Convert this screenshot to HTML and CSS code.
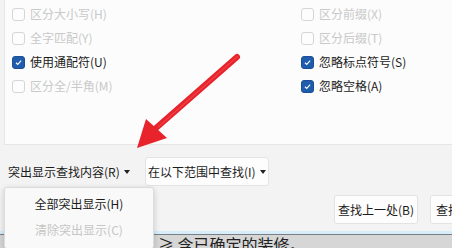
FILE: index.html
```html
<!DOCTYPE html>
<html lang="zh-CN">
<head>
<meta charset="utf-8">
<link rel="stylesheet" href="styles.css">
</head>
<body>
<div class="page">
  <section class="options">
    <div class="col col-left">
      <label class="opt disabled"><span class="box"></span>区分大小写(H)</label>
      <label class="opt disabled"><span class="box"></span>全字匹配(Y)</label>
      <label class="opt"><span class="box checked"><svg viewBox="0 0 13 13"><path d="M3.5 6.8 L5.6 8.8 L9.6 4.4" fill="none" stroke="#fff" stroke-width="1.3"/></svg></span>使用通配符(U)</label>
      <label class="opt disabled"><span class="box"></span>区分全/半角(M)</label>
    </div>
    <div class="col col-right">
      <label class="opt disabled"><span class="box"></span>区分前缀(X)</label>
      <label class="opt disabled"><span class="box"></span>区分后缀(T)</label>
      <label class="opt"><span class="box checked"><svg viewBox="0 0 13 13"><path d="M3.5 6.8 L5.6 8.8 L9.6 4.4" fill="none" stroke="#fff" stroke-width="1.3"/></svg></span>忽略标点符号(S)</label>
      <label class="opt"><span class="box checked"><svg viewBox="0 0 13 13"><path d="M3.5 6.8 L5.6 8.8 L9.6 4.4" fill="none" stroke="#fff" stroke-width="1.3"/></svg></span>忽略空格(A)</label>
    </div>
  </section>
  <div class="toolbar">
    <span class="drop-label">突出显示查找内容(R)<span class="caret"></span></span>
    <button class="btn drop-btn">在以下范围中查找(I)<span class="caret"></span></button>
  </div>
  <div class="actions">
    <button class="btn act">查找上一处(B)</button>
    <div class="clip"><button class="btn act next">查找下一处(F)</button></div>
  </div>
  <div class="docstrip">
    <div class="doctext">≥ 含已确定的装修。</div>
  </div>

  <svg class="arrow" viewBox="0 0 452 248" width="452" height="248">
    <path d="M237 57 L156 128" stroke="#e8232b" stroke-width="6" stroke-linecap="round"/>
    <path d="M238 56 L158 127" stroke="#f0545a" stroke-width="1.2" opacity="0.6"/>
    <polygon points="137,148 146,119 167,138" fill="#e8232b"/>
  </svg>

  <div class="menu">
    <div class="menu-item">全部突出显示(H)</div>
    <div class="menu-item disabled">清除突出显示(C)</div>
  </div>
</div>
</body>
</html>
```
FILE: styles.css
```css
* { box-sizing: border-box; }
html, body { margin: 0; padding: 0; }
body {
  font-family: "Noto Sans CJK SC", "Noto Sans", sans-serif;
  font-size: 12px;
  color: #1b1b1b;
  background: #f3f3f3;
  width: 452px;
  height: 248px;
  overflow: hidden;
}
.page { position: relative; width: 452px; height: 248px; overflow: hidden; }

.options {
  margin-left: 4px;
  height: 145px;
  background: #fcfcfc;
  border-left: 1px solid #e6e6e6;
  border-bottom: 1px solid #e6e6e6;
  display: grid;
  grid-template-columns: 296px 1fr;
  padding-top: 2px;
}
.col { display: flex; flex-direction: column; }
.col-left { padding-left: 7px; }
.col-right { padding-left: 0; }
.opt {
  height: 24px;
  display: flex;
  align-items: center;
  gap: 5px;
  white-space: nowrap;
  line-height: 1;
}
.opt.disabled { color: #c9c9c9; }
.box {
  width: 13px; height: 13px;
  border: 1px solid #d6d6d6;
  border-radius: 3px;
  background: #fdfdfd;
  flex: none;
  display: flex;
}
.box.checked {
  background: #1f5cab;
  border-color: #1b4f96;
}
.box svg { width: 11px; height: 11px; }

.toolbar {
  display: flex;
  align-items: center;
  height: 29px;
  margin-top: 12px;
  padding-left: 8px;
  gap: 15px;
}
.drop-label { display: flex; align-items: center; white-space: nowrap; }
.caret {
  display: inline-block;
  width: 0; height: 0;
  border-left: 3.5px solid transparent;
  border-right: 3.5px solid transparent;
  border-top: 4px solid #222;
  margin-left: 4px;
}
.btn {
  font: inherit;
  color: #1b1b1b;
  background: #fdfdfd;
  border: 1px solid #e3e3e3;
  border-radius: 3px;
  padding: 0;
  display: flex;
  align-items: center;
  justify-content: center;
  white-space: nowrap;
}
.drop-btn { width: 124px; height: 29px; }

.actions {
  display: flex;
  gap: 12px;
  padding-left: 334px;
  margin-top: 9px;
  height: 29px;
}
.act { width: 84px; height: 29px; flex: none; }
.clip { flex: 1; overflow: hidden; }
.next { justify-content: flex-start; padding-left: 5px; }

.docstrip {
  margin-top: 7px;
  height: 17px;
  border-top: 3px solid #d7edf9;
  background: #d6d6d6;
  overflow: hidden;
}
.docstrip::before {
  content: "";
  display: block;
  height: 1px;
  background: #7a7f87;
}
.doctext {
  padding-left: 158px;
  font-size: 16px;
  line-height: 16px;
  color: #222;
  margin-top: 1px;
  white-space: nowrap;
}

.arrow { position: absolute; left: 0; top: 0; pointer-events: none; }

.menu {
  position: absolute;
  left: 4px; top: 187px;
  width: 150px; height: 62px;
  background: #f9f9f9;
  border: 1px solid #dcdcdc;
  border-radius: 3px;
  box-shadow: 0 2px 6px rgba(0,0,0,0.18);
  padding-top: 2px;
}
.menu-item {
  height: 26px;
  display: flex;
  align-items: center;
  justify-content: center;
}
.menu-item.disabled { color: #c6c6c6; }
```
